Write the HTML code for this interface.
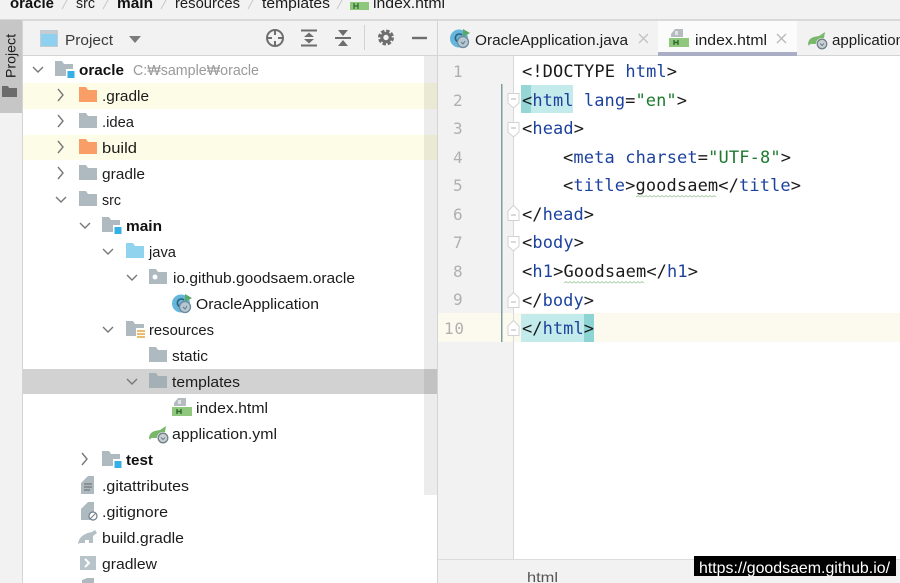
<!DOCTYPE html>
<html><head><meta charset="utf-8"><style>
html,body{margin:0;padding:0;width:900px;height:583px;overflow:hidden;background:#fff}
svg{display:block}
text{font-family:"Liberation Sans",sans-serif;font-size:15px;fill:#1c1c1c}
.b{font-weight:bold;fill:#111}
.g{fill:#9a9a9a}
.m{font-family:"DejaVu Sans Mono",monospace;font-size:17px;fill:#1a1a1a}
.t{fill:#1c429e}.s{fill:#1d7a2e}.n{font-family:"DejaVu Sans Mono",monospace;font-size:16px;fill:#b0b0b0}
.ch{fill:none;stroke:#777;stroke-width:1.4}
.sep{stroke:#c8c8c8;stroke-width:1}
.tb{fill:none;stroke:#6e6e6e;stroke-width:2}
</style></head><body>
<svg width="900" height="583" viewBox="0 0 900 583" xmlns="http://www.w3.org/2000/svg">
<defs>
<symbol id="f" viewBox="0 0 18 15" overflow="visible"><path d="M0 0H7L9 3H18V15H0Z"/></symbol>
<symbol id="mod" viewBox="0 0 20 20" overflow="visible"><path fill="#aeb9c0" d="M0 0H7L9 3H18V15H0Z"/><rect x="11" y="8" width="9" height="10" fill="#fff"/><rect x="12.500" y="10" width="7" height="7" fill="#35b0e6"/></symbol>
<symbol id="html" viewBox="0 0 20 20" overflow="visible"><path fill="#b4bcc2" d="M6 0H14V8H2V5Z"/><path fill="#fff" d="M6 2V6H9V2Z" opacity=".6"/><rect x="0" y="9" width="20" height="9" fill="#8fc87c"/><path d="M5 11V16M9 11V16M5 13.500H9" stroke="#2c6a2c" stroke-width="1.400" fill="none"/></symbol>
<symbol id="cls" viewBox="0 0 20 20" overflow="visible"><circle cx="9" cy="9.500" r="9" fill="#64b6dc"/><path d="M12 6A4 4 0 1 0 12 12" fill="none" stroke="#2e5f78" stroke-width="1.600"/><path d="M13 0L20 4L13 8Z" fill="#59a869"/><circle cx="13" cy="13" r="5.500" fill="#b7c7d1" stroke="#6d8a9c" stroke-width="1.300"/><path d="M11 13L13 15L15 12" fill="none" stroke="#5b7a8c" stroke-width="1"/></symbol>
<symbol id="leaf" viewBox="0 0 20 20" overflow="visible"><path d="M0 13C1 5 8 6 11 5L17 1L16 7C15 11 10 13 6 13C4 13 2 12 1 15Z" fill="#79b86a"/><circle cx="14" cy="13" r="6" fill="#fff"/><circle cx="14" cy="13" r="4.800" fill="#c9ced2" stroke="#6e7f8a" stroke-width="1.300"/><path d="M12 12.500L14 14.500L16 12.500" fill="none" stroke="#6e7f8a" stroke-width="1"/></symbol>
<symbol id="fold" viewBox="0 0 12 16" overflow="visible"><path d="M.5 .5H11.500V10L6 15L.5 10Z" fill="#fff" stroke="#d2d2d2"/><path d="M3.500 6H8.500" stroke="#b5b5b5"/></symbol>
<symbol id="foldu" viewBox="0 0 12 16" overflow="visible"><path d="M.5 15.500H11.500V6L6 .5L.5 6Z" fill="#fff" stroke="#d2d2d2"/><path d="M3.500 10H8.500" stroke="#b5b5b5"/></symbol>
</defs>

<!-- chrome backgrounds -->
<rect width="900" height="583" fill="#f2f2f2"/>
<rect x="0" y="19" width="900" height="2" fill="#d9d9d9"/>
<rect x="0" y="20" width="22" height="93" fill="#c6c6c6"/>
<rect x="22" y="21" width="1" height="562" fill="#d4d4d4"/>
<rect x="23" y="56" width="414" height="527" fill="#fff"/>
<rect x="23" y="55" width="877" height="1" fill="#d4d4d4"/>
<rect x="437" y="21" width="1" height="562" fill="#d4d4d4"/>

<!-- left tool strip -->
<text transform="translate(15.500,78) rotate(-90)" textLength="44" lengthAdjust="spacingAndGlyphs" style="font-size:14px">Project</text>
<path d="M2 86H8L9 88H17V97H2Z" fill="#6b6b6b"/>

<!-- breadcrumb -->
<text class="b" x="10" y="8" textLength="44" lengthAdjust="spacingAndGlyphs">oracle</text>
<path class="sep" d="M62 9L67 0M103 9L108 0M161 9L166 0M248 9L253 0M337 9L342 0"/>
<text x="76" y="8" textLength="19" lengthAdjust="spacingAndGlyphs">src</text>
<text class="b" x="117" y="8" textLength="36" lengthAdjust="spacingAndGlyphs">main</text>
<text x="175" y="8" textLength="65" lengthAdjust="spacingAndGlyphs">resources</text>
<text x="262" y="8" textLength="68" lengthAdjust="spacingAndGlyphs">templates</text>
<rect x="350" y="2" width="19" height="8" fill="#8fc87c"/><path d="M354 3V9M358 3V9M354 6H358" stroke="#2c6a2c" stroke-width="1.200"/>
<text x="373" y="8" textLength="72" lengthAdjust="spacingAndGlyphs">index.html</text>

<!-- project header -->
<rect x="40" y="30" width="18" height="17" fill="#c4ccd2"/><rect x="41" y="34" width="16" height="12" fill="#8dd0ef"/>
<text x="65" y="45" textLength="48" lengthAdjust="spacingAndGlyphs" style="fill:#3a3a3a">Project</text>
<path d="M129 36H141L135 43Z" fill="#7b7b7b"/>
<circle cx="275" cy="38" r="8" class="tb"/><path class="tb" d="M275 30V35M275 41V46M267 38H272M278 38H283"/>
<path class="tb" d="M301 30.500H317M301 45.500H317"/><path d="M309 32.500L314 37H304ZM309 43.500L314 39H304Z" fill="#6e6e6e"/>
<path class="tb" d="M335 38H351"/><path d="M343 36L338 30H348ZM343 40L338 46H348Z" fill="#6e6e6e"/>
<rect x="364" y="25" width="1" height="25" fill="#d2d2d2"/>
<circle cx="386" cy="37.500" r="6.500" fill="none" stroke="#6e6e6e" stroke-width="3" stroke-dasharray="3.400 1.700"/><circle cx="386" cy="37.500" r="4.200" fill="none" stroke="#6e6e6e" stroke-width="3"/>
<path d="M412 38H427" stroke="#6e6e6e" stroke-width="2.400"/>

<!-- tree highlights -->
<rect x="23" y="83" width="414" height="26" fill="#fdfce6"/>
<rect x="23" y="135" width="414" height="25" fill="#fdfce6"/>
<rect x="23" y="369" width="414" height="25" fill="#d2d2d2"/>
<rect x="424" y="56" width="13" height="439" fill="#000" opacity=".075"/>

<!-- chevrons -->
<g class="ch">
<path d="M33 67L38 72L43 67"/>
<path d="M58 89L63 95L58 101M58 115L63 121L58 127M58 141L63 147L58 153M58 167L63 173L58 179"/>
<path d="M56 197L61 202L66 197"/>
<path d="M80 223L85 228L90 223"/>
<path d="M103 249L108 254L113 249"/>
<path d="M127 275L132 280L137 275"/>
<path d="M103 327L108 332L113 327"/>
<path d="M127 379L132 384L137 379"/>
<path d="M82 453L87 459L82 465"/>
</g>

<!-- tree icons -->
<use href="#mod" x="55" y="61" width="20" height="20"/>
<use href="#f" x="79" y="87" width="18" height="15" fill="#fa9e68"/>
<use href="#f" x="79" y="113" width="18" height="15" fill="#aeb9c0"/>
<use href="#f" x="79" y="139" width="18" height="15" fill="#fa9e68"/>
<use href="#f" x="79" y="165" width="18" height="15" fill="#aeb9c0"/>
<use href="#f" x="79" y="191" width="18" height="15" fill="#aeb9c0"/>
<use href="#mod" x="102" y="217" width="20" height="20"/>
<use href="#f" x="126" y="243" width="18" height="15" fill="#8fd3ee"/>
<use href="#f" x="149" y="269" width="18" height="15" fill="#aeb9c0"/>
<circle cx="155" cy="277" r="2.500" fill="#fff"/>
<use href="#cls" x="172" y="294" width="20" height="20"/>
<path fill="#aeb9c0" d="M126 321H133L135 324H144V336H126Z"/>
<rect x="136" y="328" width="10" height="11" fill="#fff"/><path d="M137 331H145M137 334H145M137 337H145" stroke="#e2a63f" stroke-width="1.500"/>
<use href="#f" x="149" y="347" width="18" height="15" fill="#aeb9c0"/>
<use href="#f" x="149" y="373" width="18" height="15" fill="#a4afb6"/>
<use href="#html" x="172" y="398" width="20" height="20"/>
<use href="#leaf" x="149" y="425" width="20" height="20"/>
<use href="#mod" x="102" y="451" width="20" height="20"/>
<path d="M81 483L88 476H94V494H81Z" fill="#aeb9c0"/><path d="M84 484H92M84 487H92M84 490H90" stroke="#666" stroke-width="1"/>
<path d="M81 509L88 502H94V520H81Z" fill="#aeb9c0"/><circle cx="93" cy="516" r="4" fill="#fff" stroke="#6e7f8a" stroke-width="1.200"/><path d="M90.500 518.500L95.500 513.500" stroke="#6e7f8a"/>
<path d="M78 544C79 536 86 533 92 532L95 530L97 533L93 536V543H89V540H85V543H80Z" fill="#b4bfc6"/>
<rect x="80" y="556" width="16" height="14" fill="#b9c3ca"/><path d="M85 559L89 563L85 567" fill="none" stroke="#fff" stroke-width="2"/>
<path d="M82 583V580L87 578H94V583Z" fill="#aeb9c0"/>

<!-- tree text -->
<text class="b" x="79" y="75" textLength="45" lengthAdjust="spacingAndGlyphs">oracle</text>
<text class="g" x="133" y="75" textLength="126" lengthAdjust="spacingAndGlyphs" style="font-family:'Liberation Sans','Noto Sans CJK KR',sans-serif">C:₩sample₩oracle</text>
<text x="102" y="101" textLength="47" lengthAdjust="spacingAndGlyphs">.gradle</text>
<text x="102" y="127" textLength="32" lengthAdjust="spacingAndGlyphs">.idea</text>
<text x="102" y="153" textLength="35" lengthAdjust="spacingAndGlyphs">build</text>
<text x="102" y="179" textLength="43" lengthAdjust="spacingAndGlyphs">gradle</text>
<text x="102" y="205" textLength="19" lengthAdjust="spacingAndGlyphs">src</text>
<text class="b" x="126" y="231" textLength="36" lengthAdjust="spacingAndGlyphs">main</text>
<text x="149" y="257" textLength="27" lengthAdjust="spacingAndGlyphs">java</text>
<text x="173" y="283" textLength="182" lengthAdjust="spacingAndGlyphs">io.github.goodsaem.oracle</text>
<text x="196" y="309" textLength="123" lengthAdjust="spacingAndGlyphs">OracleApplication</text>
<text x="149" y="335" textLength="65" lengthAdjust="spacingAndGlyphs">resources</text>
<text x="172" y="361" textLength="36" lengthAdjust="spacingAndGlyphs">static</text>
<text x="172" y="387" textLength="68" lengthAdjust="spacingAndGlyphs">templates</text>
<text x="196" y="413" textLength="72" lengthAdjust="spacingAndGlyphs">index.html</text>
<text x="172" y="439" textLength="105" lengthAdjust="spacingAndGlyphs">application.yml</text>
<text class="b" x="126" y="465" textLength="27" lengthAdjust="spacingAndGlyphs">test</text>
<text x="102" y="491" textLength="87" lengthAdjust="spacingAndGlyphs">.gitattributes</text>
<text x="102" y="517" textLength="66" lengthAdjust="spacingAndGlyphs">.gitignore</text>
<text x="102" y="543" textLength="82" lengthAdjust="spacingAndGlyphs">build.gradle</text>
<text x="102" y="569" textLength="55" lengthAdjust="spacingAndGlyphs">gradlew</text>

<!-- tabs -->
<rect x="658" y="21" width="139" height="31" fill="#fbfbfb"/>
<rect x="658" y="52" width="139" height="4" fill="#a9aec4"/>
<use href="#cls" x="450" y="29" width="20" height="20"/>
<text x="475" y="45" textLength="153" lengthAdjust="spacingAndGlyphs">OracleApplication.java</text>
<path d="M639 34L648 43M648 34L639 43" stroke="#c2c2c2" stroke-width="1.300"/>
<use href="#html" x="669" y="29" width="20" height="20"/>
<text x="695" y="45" textLength="72" lengthAdjust="spacingAndGlyphs">index.html</text>
<path d="M777 34L786 43M786 34L777 43" stroke="#b8b8b8" stroke-width="1.300"/>
<use href="#leaf" x="808" y="31" width="20" height="20"/>
<text x="832" y="45" textLength="72" lengthAdjust="spacingAndGlyphs">application</text>

<!-- editor -->
<rect x="438" y="56" width="75" height="504" fill="#f2f2f2"/>
<rect x="513" y="56" width="1" height="504" fill="#d8d8d8"/>
<rect x="514" y="56" width="386" height="504" fill="#fff"/>
<rect x="438" y="313" width="462" height="29" fill="#fcfaee"/>
<rect x="513" y="313" width="1" height="29" fill="#d8d8d8"/>
<rect x="501" y="84" width="1.500" height="258" fill="#7f9c9f"/>
<rect x="521" y="85" width="52" height="28" fill="#c4ebeb"/><rect x="521" y="85" width="10" height="28" fill="#95d6d6"/>
<rect x="521" y="314" width="73" height="28" fill="#c4ebeb"/><rect x="584" y="314" width="10" height="28" fill="#8dd4d4"/>

<use href="#fold" x="507.500" y="93" width="12" height="16"/>
<use href="#fold" x="507.500" y="122" width="12" height="16"/>
<use href="#foldu" x="507.500" y="205" width="12" height="16"/>
<use href="#fold" x="507.500" y="236" width="12" height="16"/>
<use href="#foldu" x="507.500" y="292" width="12" height="16"/>
<use href="#foldu" x="507.500" y="320" width="12" height="16"/>

<g>
<text class="n" x="453" y="77" textLength="10">1</text>
<text class="n" x="453" y="106" textLength="10">2</text>
<text class="n" x="453" y="134" textLength="10">3</text>
<text class="n" x="453" y="163" textLength="10">4</text>
<text class="n" x="453" y="191" textLength="10">5</text>
<text class="n" x="453" y="220" textLength="10">6</text>
<text class="n" x="453" y="248" textLength="10">7</text>
<text class="n" x="453" y="277" textLength="10">8</text>
<text class="n" x="453" y="305" textLength="10">9</text>
<text class="n" x="444" y="334" textLength="20">10</text>
</g>

<g>
<text class="m" x="522" y="77" textLength="155" xml:space="preserve">&lt;!DOCTYPE <tspan class="t">html</tspan>&gt;</text>
<text class="m" x="522" y="106" textLength="165" xml:space="preserve">&lt;<tspan class="t">html</tspan> <tspan class="t">lang</tspan>=<tspan class="s">"en"</tspan>&gt;</text>
<text class="m" x="522" y="134" textLength="62">&lt;<tspan class="t">head</tspan>&gt;</text>
<text class="m" x="563" y="163" textLength="228" xml:space="preserve">&lt;<tspan class="t">meta</tspan> <tspan class="t">charset</tspan>=<tspan class="s">"UTF-8"</tspan>&gt;</text>
<text class="m" x="563" y="191" textLength="238">&lt;<tspan class="t">title</tspan>&gt;goodsaem&lt;/<tspan class="t">title</tspan>&gt;</text>
<text class="m" x="522" y="220" textLength="72">&lt;/<tspan class="t">head</tspan>&gt;</text>
<text class="m" x="522" y="248" textLength="62">&lt;<tspan class="t">body</tspan>&gt;</text>
<text class="m" x="522" y="277" textLength="176">&lt;<tspan class="t">h1</tspan>&gt;Goodsaem&lt;/<tspan class="t">h1</tspan>&gt;</text>
<text class="m" x="522" y="306" textLength="72">&lt;/<tspan class="t">body</tspan>&gt;</text>
<text class="m" x="522" y="334" textLength="72">&lt;/<tspan class="t">html</tspan>&gt;</text>
</g>
<path d="M636 197l2 -1.500l2 1.500l2 -1.500l2 1.500l2 -1.500l2 1.500l2 -1.500l2 1.500l2 -1.500l2 1.500l2 -1.500l2 1.500l2 -1.500l2 1.500l2 -1.500l2 1.500l2 -1.500l2 1.500l2 -1.500l2 1.500l2 -1.500l2 1.500l2 -1.500l2 1.500l2 -1.500l2 1.500l2 -1.500l2 1.500l2 -1.500l2 1.500l2 -1.500l2 1.500l2 -1.500l2 1.500l2 -1.500l2 1.500l2 -1.500l2 1.500l2 -1.500l2 1.500" fill="none" stroke="#a9cfa9" stroke-width=".8"/>
<path d="M564 283l2 -1.500l2 1.500l2 -1.500l2 1.500l2 -1.500l2 1.500l2 -1.500l2 1.500l2 -1.500l2 1.500l2 -1.500l2 1.500l2 -1.500l2 1.500l2 -1.500l2 1.500l2 -1.500l2 1.500l2 -1.500l2 1.500l2 -1.500l2 1.500l2 -1.500l2 1.500l2 -1.500l2 1.500l2 -1.500l2 1.500l2 -1.500l2 1.500l2 -1.500l2 1.500l2 -1.500l2 1.500l2 -1.500l2 1.500l2 -1.500l2 1.500l2 -1.500l2 1.500" fill="none" stroke="#a9cfa9" stroke-width=".8"/>

<!-- status / bottom -->
<rect x="438" y="560" width="462" height="23" fill="#f2f2f2"/>
<rect x="438" y="559" width="462" height="1" fill="#dcdcdc"/>
<text x="527" y="582" textLength="31" lengthAdjust="spacingAndGlyphs" style="font-size:14px;fill:#555">html</text>
<rect x="694" y="556" width="202" height="20" fill="#000"/>
<text x="699" y="573" textLength="191" lengthAdjust="spacingAndGlyphs" style="font-size:16px;fill:#fff">https://goodsaem.github.io/</text>
</svg>
</body></html>
